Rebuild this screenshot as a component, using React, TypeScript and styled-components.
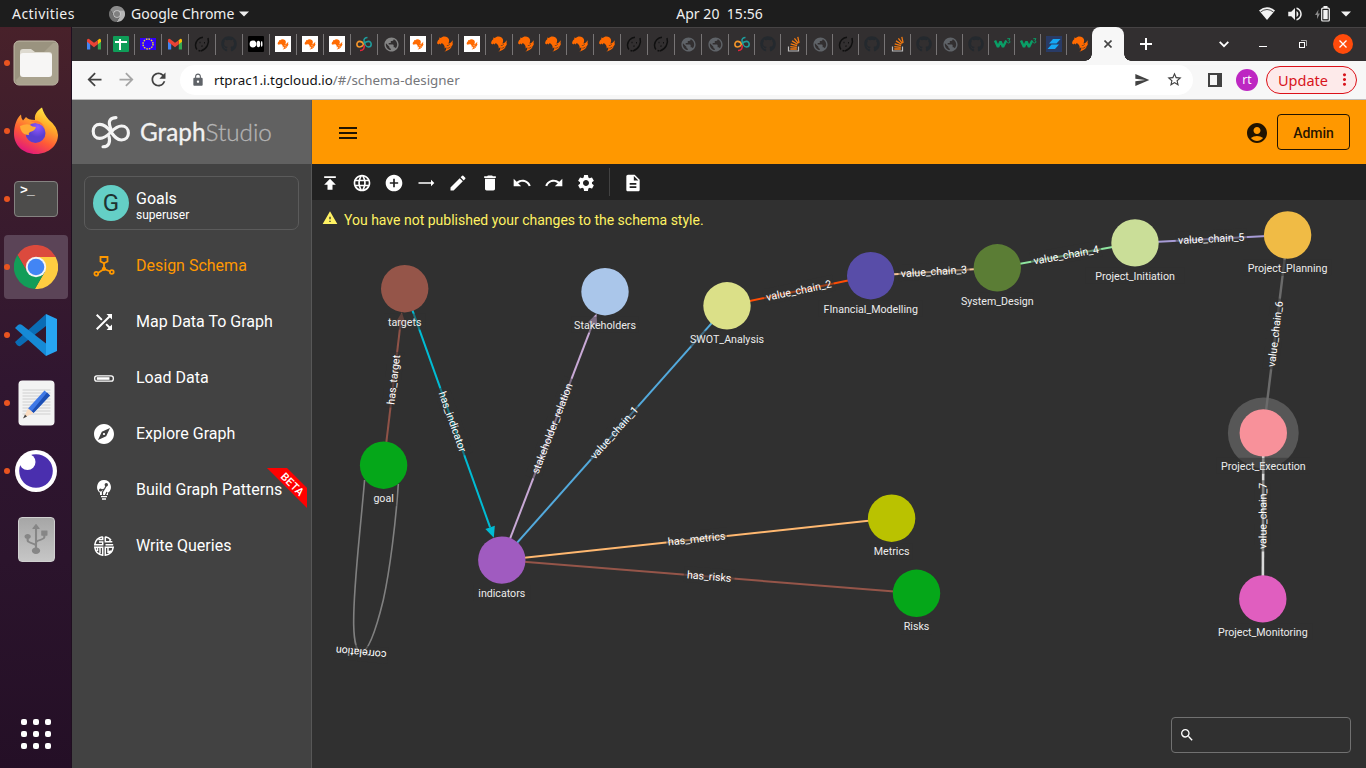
import React from "react";
import styled, { createGlobalStyle } from "styled-components";
import {
  MdPublish, MdLanguage, MdAddCircle, MdTrendingFlat, MdCreate, MdDelete, MdUndo, MdRedo,
  MdSettings, MdDescription, MdWarning, MdMenu, MdAccountCircle, MdSearch, MdShuffle, MdExplore,
  MdPublic, MdLock, MdArrowBack, MdArrowForward, MdRefresh, MdSend, MdStarBorder, MdMoreVert,
  MdVolumeUp,
} from "react-icons/md";
import { FaGithub, FaUsb } from "react-icons/fa";

const GlobalStyle = createGlobalStyle`
  * { box-sizing: border-box; }
  body { margin: 0; background: #303030; overflow: hidden; }
  svg { display: block; flex: none; }
`;

const ubuntu = `"Noto Sans", sans-serif`;
const roboto = `Roboto, sans-serif`;

const Desktop = styled.div`
  width: 1366px;
  height: 768px;
  display: flex;
  flex-direction: column;
  overflow: hidden;
  font-family: ${roboto};
`;

/* ---------- system bar ---------- */
const SystemBar = styled.header`
  height: 27px;
  display: grid;
  grid-template-columns: 1fr auto 1fr;
  align-items: center;
  background: #1d1d1d;
  color: #f0f0f0;
  font: 14px/27px ${ubuntu};
  white-space: pre;
`;
const SystemLeft = styled.div`
  display: flex;
  align-items: center;
  padding-left: 12px;
`;
const Activities = styled.span`
  width: 97px;
  letter-spacing: 0.45px;
`;
const AppName = styled.span`
  padding: 0 5px 0 6px;
`;
const Clock = styled.div`
  padding-left: 73px;
  letter-spacing: 0.05px;
`;
const SystemRight = styled.div`
  display: flex;
  align-items: center;
  justify-content: flex-end;
  padding-right: 15px;
`;
const TrayIcon = styled.span<{ $gap: number }>`
  margin-left: ${(p) => p.$gap}px;
`;

const Workspace = styled.div`
  flex: 1;
  display: flex;
  min-height: 0;
`;

/* ---------- dock ---------- */
const Dock = styled.nav`
  width: 72px;
  display: flex;
  flex-direction: column;
  gap: 4px;
  padding: 4px 4px 0;
  background: linear-gradient(#48212a, #3b1c2d 22%, #301630 48%, #2b142c 72%, #240f26);
  border-right: 1px solid #1f0f20;
`;
const DockItem = styled.div<{ $active?: boolean }>`
  width: 64px;
  height: 64px;
  flex: none;
  display: flex;
  align-items: center;
  justify-content: center;
  position: relative;
  border-radius: 4px;
  background: ${(p) => (p.$active ? "#5b4457" : "transparent")};
`;
const RunningDot = styled.i`
  position: absolute;
  left: 0;
  top: 29px;
  width: 6px;
  height: 6px;
  border-radius: 50%;
  background: #e95420;
`;
const AppsGrid = styled.div`
  margin: auto auto 19px;
  display: grid;
  grid-template-columns: repeat(3, 6px);
  gap: 6px;
  i {
    height: 6px;
    border-radius: 2px;
    background: #fff;
  }
`;

/* ---------- browser ---------- */
const Browser = styled.main`
  flex: 1;
  min-width: 0;
  display: flex;
  flex-direction: column;
`;
const TabStrip = styled.div`
  height: 34px;
  display: flex;
  align-items: flex-start;
  padding-left: 9px;
  background: #322f30;
  border-top: 1px solid #464344;
`;
const Tab = styled.div<{ $width: number; $last?: boolean }>`
  width: ${(p) => p.$width}px;
  height: 21px;
  margin-top: 6px;
  padding: 0 0 1px 5px;
  display: flex;
  align-items: center;
  flex: none;
  border-right: ${(p) => (p.$last ? "none" : "1px solid #777475")};
`;
const ActiveTab = styled.div`
  width: 32px;
  height: 34px;
  margin: -1px 0 0 -1px;
  display: flex;
  align-items: center;
  justify-content: center;
  background: #f7f7f7;
  border-radius: 8px 8px 0 0;
  position: relative;
  &::before, &::after {
    content: "";
    position: absolute;
    bottom: 0;
    width: 7px;
    height: 7px;
  }
  &::before { left: -7px; background: radial-gradient(circle at 0 0, transparent 6.5px, #f7f7f7 7px); }
  &::after { right: -7px; background: radial-gradient(circle at 100% 0, transparent 6.5px, #f7f7f7 7px); }
`;
const WindowTools = styled.div`
  flex: 1;
  height: 32px;
  display: flex;
  align-items: center;
  padding: 0 13px 0 15px;
`;
const ToolGap = styled.span<{ $w: number }>`
  width: ${(p) => p.$w}px;
`;
const CloseButton = styled.span`
  width: 20px;
  height: 20px;
  border-radius: 50%;
  background: #ff4b0b;
  display: grid;
  place-items: center;
`;
const AddressRow = styled.div`
  height: 39px;
  display: flex;
  align-items: center;
  padding: 0 9px 1px 11px;
  background: #f7f7f7;
  border-bottom: 1px solid #bdbdbd;
  color: #424242;
`;
const NavIcon = styled.span<{ $dim?: boolean }>`
  width: 32px;
  padding-left: 0.5px;
  display: flex;
  color: ${(p) => (p.$dim ? "#a5a5a5" : "#424242")};
`;
const AddressBar = styled.div`
  width: 1013px;
  height: 30px;
  margin-left: 1px;
  display: flex;
  align-items: center;
  padding: 0 10px 0 11px;
  border-radius: 15px;
  background: #fff;
  color: #5f6368;
  font: 13.4px/30px ${ubuntu};
`;
const Url = styled.span`
  flex: 1;
  margin-left: 9px;
  color: #75767a;
  b { font-weight: 400; color: #111; }
`;
const Profile = styled.span`
  width: 22px;
  height: 22px;
  margin: 0 8px 0 14px;
  border-radius: 50%;
  background: #bd27c2;
  color: #fff;
  font: 12px/21px ${ubuntu};
  text-align: center;
`;
const UpdateButton = styled.button`
  width: 91px;
  height: 28px;
  display: flex;
  align-items: center;
  justify-content: space-between;
  padding: 0 2px 0 11px;
  border: 1px solid #dc1018;
  border-radius: 14px;
  background: #fdeaea;
  color: #d8141c;
  font: 14.5px/26px ${ubuntu};
`;

/* ---------- web app ---------- */
const Studio = styled.div`
  flex: 1;
  display: flex;
  min-height: 0;
  color: #fff;
`;
const SideBar = styled.aside`
  width: 240px;
  background: #424242;
  border-right: 1px solid #575757;
`;
const Brand = styled.div`
  height: 64px;
  display: flex;
  align-items: center;
  padding-left: 19px;
  background: #616161;
`;
const BrandName = styled.div`
  margin-left: 9px;
  font: 400 24.3px/64px Lato, sans-serif;
  color: #f2f2f2;
  -webkit-text-stroke: 0.3px #f2f2f2;
  span { color: #b4b4b4; font-weight: 300; -webkit-text-stroke: 0.3px #b4b4b4; }
`;
const GraphCard = styled.div`
  height: 54px;
  margin: 12px 12px 0;
  display: flex;
  align-items: center;
  padding-left: 8px;
  border: 1px solid #5b5b5b;
  border-radius: 7px;
`;
const Avatar = styled.div`
  width: 36px;
  height: 36px;
  border-radius: 50%;
  background: #64cfc6;
  color: #1e3331;
  font: 24px/36px ${roboto};
  text-align: center;
`;
const GraphInfo = styled.div`
  margin-left: 7px;
  padding-top: 4px;
  font: 16px/19px ${roboto};
  small { display: block; font-size: 12px; line-height: 14px; }
`;
const NavList = styled.div`
  padding-top: 8px;
`;
const NavItem = styled.div<{ $active?: boolean }>`
  height: 56px;
  display: flex;
  align-items: center;
  position: relative;
  padding-left: 20px;
  font: 16px/24px ${roboto};
  color: ${(p) => (p.$active ? "#ff9800" : "#fff")};
`;
const NavGlyph = styled.span`
  width: 44px;
  display: flex;
`;
const BetaRibbon = styled.div`
  position: absolute;
  left: 195px;
  top: 6px;
  width: 40px;
  height: 40px;
  background: #f00;
  clip-path: polygon(0 0, 50% 0, 100% 50%, 100% 100%);
  display: grid;
  place-items: center;
  span {
    font: 500 11px/11px ${roboto};
    letter-spacing: 0.2px;
    transform: translate(5.5px, -4px) rotate(45deg);
  }
`;

const Content = styled.section`
  flex: 1;
  display: flex;
  flex-direction: column;
  min-width: 0;
  background: #303030;
`;
const AppBar = styled.div`
  height: 64px;
  display: flex;
  align-items: center;
  padding: 1px 16px 0 24px;
  background: #ff9800;
  color: rgba(0, 0, 0, 0.87);
`;
const AdminButton = styled.button`
  width: 73px;
  height: 36px;
  margin: -1px 0 0 8px;
  border: 1px solid rgba(0, 0, 0, 0.87);
  border-radius: 4px;
  background: none;
  color: inherit;
  font: 500 14px/34px ${roboto};
`;
const Spacer = styled.span`
  flex: 1;
`;
const ToolBar = styled.div`
  height: 36px;
  display: flex;
  align-items: center;
  padding: 2px 0 0 2px;
  background: #212121;
`;
const Tool = styled.span`
  width: 32px;
  padding-left: 6px;
  display: flex;
`;
const ToolDivider = styled.span`
  width: 1px;
  height: 28px;
  margin: -2px 7px 0;
  background: #424242;
`;
const Canvas = styled.div`
  flex: 1;
  position: relative;
`;
const Notice = styled.div`
  display: flex;
  align-items: center;
  gap: 6px;
  padding: 10px 0 0 10px;
  color: #fff263;
  font: 14px/20px ${roboto};
  position: relative;
  svg { margin-top: -4px; }
`;
const Graph = styled.svg`
  position: absolute;
  inset: 0;
  font-family: ${roboto};
  font-size: 10.67px;
`;
const SearchBox = styled.label`
  position: absolute;
  right: 15px;
  bottom: 15px;
  width: 180px;
  height: 36px;
  display: flex;
  align-items: center;
  padding-left: 7px;
  border: 1px solid #717171;
  border-radius: 4px;
`;

/* ---------- favicons ---------- */
const Gmail = () => (
  <svg width="16" height="16" viewBox="0 0 16 16">
    <path d="M1 4v9.500h3.200V6.500z" fill="#4285f4" />
    <path d="M15 4v9.500h-3.200V6.500z" fill="#34a853" />
    <path d="M11.800 4.200L13 3q2-.8 2 1.500v1.300l-3.200 2.500z" fill="#fbbc04" />
    <path d="M1 4.500Q1 2.200 3 3L8 6.800 11.800 4.200V8.300L8 11.200 4.200 8.300 1 5.800z" fill="#ea4335" />
  </svg>
);
const Sheets = () => (
  <svg width="16" height="16" viewBox="0 0 16 16">
    <rect width="16" height="16" rx="1" fill="#0f9d58" />
    <path d="M2 6h12M7 3v11" stroke="#fff" strokeWidth="2" />
  </svg>
);
const Stars = () => (
  <svg width="16" height="16" viewBox="0 0 16 16">
    <rect y="2" width="16" height="12" fill="#3200ff" />
    <circle cx="8" cy="8" r="5" fill="none" stroke="#e8dc20" strokeWidth="1.4" strokeDasharray="1.6 1" />
  </svg>
);
const DarkFace = () => (
  <svg width="16" height="16" viewBox="0 0 16 16" fill="none" stroke="#101010" strokeWidth="1.5">
    <path d="M9 1.200C5 1.500 1.500 5 1.500 9c0 2 .8 4 1.500 4.500M14 2c1.500 5-1 11-7 13M4.500 14.500l2 .5" />
    <path d="M5.500 6.500h1M10 6.800h1M7.500 10l1 .3" />
  </svg>
);
const Medium = () => (
  <svg width="16" height="16" viewBox="0 0 16 16">
    <rect width="16" height="16" rx="1" fill="#000" />
    <circle cx="5" cy="8" r="3.400" fill="#fff" />
    <ellipse cx="10.400" cy="8" rx="1.800" ry="3.200" fill="#fff" />
    <ellipse cx="13.700" cy="8" rx=".8" ry="3" fill="#fff" />
  </svg>
);
const tigerPath =
  "M0 7.300C.4 4.800 1.400 3.800 2.300 3.300L2.300 1.600L3.800 2C5.200.3 8.500-.2 10.600 1.600C12.400 3 12.600 5.200 11.300 7.600C13.300 7.200 14.700 6 15.400 4.200C15.900 5.600 15.700 6.600 15.200 7.500L16 7.200C15.700 9.300 14.600 10.500 13.600 11.200L14.600 11.100C13.300 13.200 10.900 14.800 7.300 15.800C9 14.400 9.600 12.900 9.200 11.200L7.600 12.400C7.900 10.700 7.400 9.400 6.300 8.300L4.800 7L3.600 8.400L2.400 7.600L1.400 8.600Z";
const Tiger = ({ boxed }: { boxed?: boolean }) => (
  <svg width="16" height="16" viewBox="0 0 16 16">
    {boxed && <rect width="16" height="16" fill="#fff" />}
    <g transform={boxed ? "translate(2.600 3) scale(.68)" : undefined}>
      <path d={tigerPath} fill="#ff6a00" />
      <path d="M12.800 8.200Q11.500 9.800 9.800 9.600M13.300 11Q12 12.300 10.300 12.200" stroke={boxed ? "#fff" : "#322f30"} strokeWidth=".6" fill="none" />
    </g>
  </svg>
);
const InfinityMark = () => (
  <svg width="16" height="16" viewBox="0 0 16 16" fill="none" strokeWidth="1.600">
    <path d="M8 8C6.300 10.500 5 11 3.700 11C2 11 .9 9.800.9 8.200C.9 6.600 2 5.400 3.700 5.400C5.500 5.400 7 6.800 8 8.500" stroke="#f5962a" />
    <path d="M11.500 1.500C9 1.500 7.700 3 8 5C8.400 7.500 10 11 12.400 11C14.200 11 15.200 9.800 15.200 8.200C15.200 6.600 14.200 5.400 12.400 5.400C10.800 5.400 9 6.500 8 8" stroke="#1f9c9c" />
    <path d="M8 9C8.800 12 7.500 14.600 4 14.500" stroke="#e0263c" />
  </svg>
);
const Globe = ({ dim }: { dim?: boolean }) => <MdPublic size={17} color={dim ? "#5f6368" : "#858585"} />;
const SchoolMark = () => (
  <svg width="17" height="16" viewBox="0 0 17 16" fill="none" stroke="#0a9e66">
    <path d="M1 4.500L4 11 6.500 5.500 9 11 12.300 4.500" strokeWidth="2.500" strokeLinejoin="bevel" />
    <path d="M13.300 2.700H16L14.800 4.500Q16.500 5 15.800 6.500Q14.500 7.500 13.300 6.500" strokeWidth="1" />
  </svg>
);
const BlueMark = () => (
  <svg width="16" height="16" viewBox="0 0 16 16">
    <rect width="16" height="16" fill="#293b66" />
    <path d="M7 3h7.500L10.500 7.400H3zM5.500 8.600H13L9 13H1.500z" fill="#15a7f5" />
  </svg>
);
const favicons: Record<string, React.ReactNode> = {
  m: <Gmail />, s: <Sheets />, e: <Stars />, d: <DarkFace />, M: <Medium />,
  g: <FaGithub size={16} color="#24292e" />, b: <Tiger boxed />, t: <Tiger />, i: <InfinityMark />,
  p: <Globe />, q: <Globe dim />, w: <SchoolMark />, z: <BlueMark />,
  o: (
    <svg width="16" height="16" viewBox="0 0 16 16" fill="none">
      <path d="M2.500 10.500V15h10v-4.500" stroke="#bcbbbb" strokeWidth="1.200" />
      <path d="M4.300 13h6.500M4.300 10.600l6.500.7M4.700 7.800l6.300 1.900M6 4.900l5.500 3.300M8.400 2.400l4 5M11.800.8l1.300 6" stroke="#f47a10" strokeWidth="1.300" />
    </svg>
  ),
};
const tabs = "msemdgMbbbipbtbtttttddq" + "qigoqdgogqgwwzt";

/* ---------- dock artwork ---------- */
const FilesIcon = () => (
  <svg width="46" height="46" viewBox="0 0 46 46">
    <rect x="1" y="1" width="44" height="44" rx="5" fill="#9a937f" stroke="#c1bba9" />
    <path d="M3 40L40 3H44V44H4z" fill="#a9a28e" />
    <path d="M7 12q0-3 3-3h8l4 3h14q3 0 3 3v8H7z" fill="#dedad0" />
    <rect x="7" y="13" width="32" height="24" rx="3" fill="#f7f6f5" />
  </svg>
);
const FirefoxIcon = () => (
  <svg width="46" height="48" viewBox="0 0 46 48">
    <defs>
      <linearGradient id="flame" x1=".8" y1="0" x2=".3" y2="1">
        <stop offset="0" stopColor="#fff44f" /><stop offset=".3" stopColor="#ffb52a" />
        <stop offset=".65" stopColor="#ff5a36" /><stop offset="1" stopColor="#e0157f" />
      </linearGradient>
      <radialGradient id="orb" cx=".6" cy=".2"><stop offset="0" stopColor="#9059ff" /><stop offset="1" stopColor="#5a3fd0" /></radialGradient>
    </defs>
    <path d="M1 27C1 18 4 11 8 7.500q0 4 2 6l3-3.500q2 3 9 3C21 7 25 3 29 .5q2 7 7 12.500 8 6 9 15C45 38 36 47 23 47S1 38 1 27z" fill="url(#flame)" />
    <circle cx="22.500" cy="26" r="10" fill="url(#orb)" />
    <path d="M7 19q7-3 10-1 2 2 6 2-1 4-6 5-2 1-1 3-5 0-7-3-2-3-2-6z" fill="#ffab35" />
    <path d="M17 14q9-2 14 5 2 4 1 9 2-11-10-12z" fill="#ff7a33" />
  </svg>
);
const TerminalFace = styled.div`
  width: 44px;
  height: 36px;
  border: 1px solid #858381;
  border-radius: 4px;
  background: #4d4c4b;
  color: #fff;
  font: 700 13px/15px "Liberation Mono", monospace;
  letter-spacing: -0.7px;
  padding: 1px 0 0 5px;
`;
const ChromeIcon = ({ size, mono }: { size: number; mono?: boolean }) => {
  const c = mono ? ["#8c8c8c", "#b5b5b5", "#6f6f6f", "#808080", "#d0d0d0"] : ["#dc4a3d", "#fecd41", "#129d58", "#4285f4", "#f4f4f4"];
  return (
    <svg width={size} height={size} viewBox="0 0 44 44">
      <path d="M22 12H41.600A22 22 0 0 0 3.500 10L13.340 27z" fill={c[0]} />
      <path d="M30.660 27L20.900 44A22 22 0 0 0 41.600 12H22z" fill={c[1]} />
      <path d="M13.340 27L3.500 10A22 22 0 0 0 20.900 44L30.660 27z" fill={c[2]} />
      <circle cx="22" cy="22" r="10.200" fill={c[4]} />
      <circle cx="22" cy="22" r="8.300" fill={c[3]} />
    </svg>
  );
};
const CodeIcon = () => (
  <svg width="42" height="42" viewBox="0 0 42 42">
    <path d="M0 28L31 0V12L6 31.500Q4 33 2 31z" fill="#0a6cb5" />
    <path d="M0 14L3 11Q5 9.500 7 11L31 29.500V42z" fill="#168ad6" />
    <path d="M31 0L42 5V37L31 42z" fill="#27a5f2" />
  </svg>
);
const EditorIcon = () => (
  <svg width="37" height="46" viewBox="0 0 36 46">
    <rect width="36" height="45" rx="4" y=".5" fill="#f3f3f3" />
    {[10, 13, 16, 19, 22, 25, 28, 31, 34].map((y) => <path key={y} d={`M4 ${y}H32`} stroke="#cfcfcf" />)}
    <path d="M26 10.500l5.500 5L15 33l-5.500-4.500z" fill="#3f78e6" />
    <path d="M28.500 12.500l3 3L15 33l-2-1.500z" fill="#1d4fb4" />
    <path d="M9.500 28.500L15 33 5 38z" fill="#fbdcc0" />
    <path d="M6.500 34.500l2 2L4.500 38.500z" fill="#444" />
  </svg>
);
const MoonIcon = () => (
  <svg width="42" height="42" viewBox="0 0 42 42">
    <circle cx="21" cy="21" r="21" fill="#fff" />
    <circle cx="21" cy="21" r="16.800" fill="#4a2fae" />
    <circle cx="12.500" cy="12" r="8" fill="#fff" />
  </svg>
);
const DriveFace = styled.div`
  width: 37px;
  height: 45px;
  border-radius: 4px;
  border: 1px solid #d0d0d0;
  background: linear-gradient(#a6a6a6, #c6c6c6);
  color: #868686;
  display: grid;
  place-items: center;
  svg { transform: rotate(-90deg) scaleY(1.25); }
`;

const dockItems: { icon: React.ReactNode; running?: boolean; active?: boolean }[] = [
  { icon: <FilesIcon />, running: true },
  { icon: <FirefoxIcon />, running: true },
  { icon: <TerminalFace>&gt;_</TerminalFace>, running: true },
  { icon: <ChromeIcon size={44} />, running: true, active: true },
  { icon: <CodeIcon />, running: true },
  { icon: <EditorIcon />, running: true },
  { icon: <MoonIcon />, running: true },
  { icon: <DriveFace><FaUsb size={30} /></DriveFace> },
];

/* ---------- sidebar glyphs ---------- */
const SchemaGlyph = () => (
  <svg width="24" height="24" viewBox="0 0 24 24" fill="none" stroke="currentColor" strokeWidth="1.800">
    <path d="M8.500 3h7v4.500L12 9.300 8.500 7.500z" />
    <path d="M12 9v6M12 15l-6 4M12 15l6.500 2.500" />
    <circle cx="4.300" cy="19.800" r="1.900" /><circle cx="19.800" cy="18" r="1.900" />
    <circle cx="12" cy="14.800" r="1.200" fill="currentColor" />
  </svg>
);
const LoadGlyph = () => (
  <svg width="24" height="24" viewBox="0 0 24 24" fill="none" stroke="#fff">
    <rect x="2.700" y="9.900" width="18.600" height="5.200" rx="2.200" strokeWidth="1.300" />
    <path d="M4.800 12.500h12.700" strokeWidth="2.600" />
  </svg>
);
const PatternGlyph = () => (
  <svg width="24" height="24" viewBox="0 0 24 24">
    <path d="M12 2a7 7 0 0 0-4 12.700V17h8v-2.300A7 7 0 0 0 12 2z" fill="#fff" />
    <path d="M8 12.500l4.500-1.500 2-4M10.500 17v-3l2-3M13.500 17l1.500-3" fill="none" stroke="#424242" strokeWidth="1.200" />
    <circle cx="14.300" cy="6.700" r="1.700" fill="#424242" /><circle cx="8.500" cy="12" r="1.500" fill="#424242" />
    <path d="M9 18.700h6M10 21h4" stroke="#fff" strokeWidth="1.300" />
  </svg>
);
const QueryGlyph = () => (
  <svg width="24" height="24" viewBox="0 0 24 24" fill="none" stroke="#fff" strokeWidth="1.500">
    <path d="M10.700 2.800A9.400 9.400 0 0 0 2.800 10.700H10.700V8H7M10.700 2.800V5.500H6.500M13.300 2.800V7.800H20.300M13.300 2.800A9.400 9.400 0 0 1 19 6M13.500 10.700H21.200M18 5v3M2.800 13.300A9.400 9.400 0 0 0 10.700 21.200V13.300zM5.500 13.500v3.500M8 13.500v6M13.300 21.200V13.300H21.200A9.400 9.400 0 0 1 13.300 21.200zM16 13.500v4.500l3-1" />
  </svg>
);
const navItems: { label: string; icon: React.ReactNode; active?: boolean; beta?: boolean }[] = [
  { label: "Design Schema", icon: <SchemaGlyph />, active: true },
  { label: "Map Data To Graph", icon: <MdShuffle size={24} /> },
  { label: "Load Data", icon: <LoadGlyph /> },
  { label: "Explore Graph", icon: <MdExplore size={24} /> },
  { label: "Build Graph Patterns", icon: <PatternGlyph />, beta: true },
  { label: "Write Queries", icon: <QueryGlyph /> },
];
const BrandMark = () => (
  <svg width="40" height="36" viewBox="0 0 40 36" fill="none" stroke="#f4f4f4" strokeWidth="3.100" strokeLinecap="round">
    <path d="M20 18C23 22 25.500 26 30.500 26C35 26 37.400 23 37.400 19C37.400 14.900 34.600 12 30.500 12C26 12 23 15 20 18C16.500 21.500 13.500 24.400 8.900 24.400C4.800 24.400 2.200 21.400 2.200 17.300C2.200 13.200 4.600 10.400 8.900 10.400C14 10.400 17 14 20 18Z" />
    <path d="M25 3.600C19.500 3.600 17.500 7 18.600 11C19 13 19.800 15 21 17M18 22.500C19.500 28 18 32.800 12 32.800" />
  </svg>
);

/* ---------- schema graph ---------- */
const R = 23.7;
type Pt = [number, number];
const nodes: Record<string, { at: Pt; fill: string; halo?: boolean }> = {
  targets: { at: [404.7, 288.7], fill: "#955549" },
  Stakeholders: { at: [605, 291.7], fill: "#aac6ea" },
  SWOT_Analysis: { at: [727, 305.8], fill: "#dbe088" },
  FInancial_Modelling: { at: [870.7, 275.7], fill: "#584da8" },
  System_Design: { at: [997.3, 267.8], fill: "#5b7d35" },
  Project_Initiation: { at: [1135, 242.9], fill: "#cade98" },
  Project_Planning: { at: [1287.6, 235], fill: "#f0bb45" },
  Project_Execution: { at: [1263.3, 432.9], fill: "#f8919a", halo: true },
  Project_Monitoring: { at: [1262.8, 598.9], fill: "#e05ebf" },
  goal: { at: [383.6, 465.2], fill: "#05a719" },
  indicators: { at: [501.8, 560.1], fill: "#a05bc0" },
  Metrics: { at: [891.6, 518.2], fill: "#bac200" },
  Risks: { at: [916.5, 593.3], fill: "#05a719" },
};
const edges: { from: string; to: string; label: string; color: string; arrow?: boolean; w?: number }[] = [
  { from: "goal", to: "targets", label: "has_target", color: "#8f5247", arrow: true },
  { from: "targets", to: "indicators", label: "has_indicator", color: "#00bcd4", arrow: true },
  { from: "indicators", to: "Stakeholders", label: "stakeholder_relation", color: "#c8a9d6", arrow: true },
  { from: "indicators", to: "SWOT_Analysis", label: "value_chain_1", color: "#53aadd" },
  { from: "SWOT_Analysis", to: "FInancial_Modelling", label: "value_chain_2", color: "#ff4d05" },
  { from: "FInancial_Modelling", to: "System_Design", label: "value_chain_3", color: "#f5c396" },
  { from: "System_Design", to: "Project_Initiation", label: "value_chain_4", color: "#8fe6a0" },
  { from: "Project_Initiation", to: "Project_Planning", label: "value_chain_5", color: "#a79bd6" },
  { from: "Project_Execution", to: "Project_Planning", label: "value_chain_6", color: "#6b6b6b", w: 2.4 },
  { from: "Project_Monitoring", to: "Project_Execution", label: "value_chain_7", color: "#d9d9d9", w: 2.6 },
  { from: "indicators", to: "Metrics", label: "has_metrics", color: "#ffb870" },
  { from: "indicators", to: "Risks", label: "has_risks", color: "#955549" },
];

const GraphLabel = ({ x, y, rot = 0, text, color, length }: { x: number; y: number; rot?: number; text: string; color: string; length: number }) => (
  <g transform={`translate(${x} ${y}) rotate(${rot})`}>
    <rect x={-length / 2} y={-8.8} width={length} height={16} fill="#303030" opacity={0.5} />
    <text textAnchor="middle" y={3.4} fill={color}>{text}</text>
  </g>
);

const SchemaGraph = () => (
  <Graph width="1054" height="568" viewBox="312 200 1054 568">
    {Object.values(nodes).filter((n) => n.halo).map((n) => (
      <circle key={n.fill} cx={n.at[0]} cy={n.at[1]} r={35.4} fill="#575757" />
    ))}
    <path d="M364.600 480C359 545 353 590 353.700 625C354 640 356.500 652 361 652.500C368 652 376 630 383.300 600C390 570 396 520 398.300 484" fill="none" stroke="#808080" strokeWidth="1.600" />
    {edges.map((e) => {
      const [x1, y1] = nodes[e.from].at;
      const [x2, y2] = nodes[e.to].at;
      const len = Math.hypot(x2 - x1, y2 - y1);
      const ux = (x2 - x1) / len;
      const uy = (y2 - y1) / len;
      const tx = x2 - ux * R;
      const ty = y2 - uy * R;
      const bx = tx - ux * 11;
      const by = ty - uy * 11;
      return (
        <g key={e.label}>
          <line x1={x1} y1={y1} x2={e.arrow ? bx : x2} y2={e.arrow ? by : y2} stroke={e.color} strokeWidth={e.w ?? 2} />
          {e.arrow && (
            <polygon fill={e.color} points={`${tx},${ty} ${bx - uy * 5},${by + ux * 5} ${bx + uy * 5},${by - ux * 5}`} />
          )}
        </g>
      );
    })}
    {Object.entries(nodes).map(([name, n]) => (
      <circle key={name} cx={n.at[0]} cy={n.at[1]} r={R} fill={n.fill} />
    ))}
    {edges.map((e) => {
      const [x1, y1] = nodes[e.from].at;
      const [x2, y2] = nodes[e.to].at;
      const len = Math.hypot(x2 - x1, y2 - y1);
      const shift = e.arrow ? 2.8 : 0;
      const x = (x1 + x2) / 2 - ((x2 - x1) / len) * shift;
      const y = (y1 + y2) / 2 - ((y2 - y1) / len) * shift;
      const rot = (Math.atan2(y2 - y1, x2 - x1) * 180) / Math.PI;
      return <GraphLabel key={e.label} x={x} y={y} rot={rot} text={e.label} color="#fff" length={e.label.length * 5.1 + 5} />;
    })}
    <GraphLabel x={361} y={652.5} rot={185.6} text="correlation" color="#fff" length={54} />
    {Object.entries(nodes).map(([name, n]) => (
      <GraphLabel key={name} x={n.at[0]} y={n.at[1] + 33.7} text={name} color="#ececec" length={name.length * 5.2 + 5} />
    ))}
  </Graph>
);

const tools = [MdPublish, MdLanguage, MdAddCircle, MdTrendingFlat, MdCreate, MdDelete, MdUndo, MdRedo, MdSettings];

export default function App() {
  return (
    <>
      <GlobalStyle />
      <Desktop>
        <SystemBar>
          <SystemLeft>
            <Activities>Activities</Activities>
            <ChromeIcon size={16} mono />
            <AppName>Google Chrome</AppName>
            <svg width="10" height="6" viewBox="0 0 10 6"><path d="M0 .5h10L5 5.500z" fill="#eee" /></svg>
          </SystemLeft>
          <Clock>{"Apr 20  15:56"}</Clock>
          <SystemRight>
            <svg width="16" height="13" viewBox="0 0 16 13"><path d="M0 3.500Q8-3 16 3.500L8 13z" fill="#f2f2f2" /><path d="M1.500 5Q8 0 14.500 5" fill="none" stroke="#1d1d1d" strokeWidth=".8" /></svg>
            <TrayIcon $gap={11}><MdVolumeUp size={18} /></TrayIcon>
            <TrayIcon $gap={10}>
              <svg width="17" height="16" viewBox="0 0 17 16">
                <path d="M4.500 3.500L1 9h2v4l3-5.500H4z" fill="#888" />
                <rect x="7.700" y="2.200" width="7.600" height="12.800" rx="1" fill="none" stroke="#f2f2f2" strokeWidth="1.200" />
                <rect x="9.300" y="4" width="4.400" height="9.200" fill="#f2f2f2" /><rect x="9.500" y="0" width="4" height="2" fill="#f2f2f2" />
              </svg>
            </TrayIcon>
            <TrayIcon $gap={10}><svg width="10" height="6" viewBox="0 0 10 6"><path d="M0 .5h10L5 5.500z" fill="#f2f2f2" /></svg></TrayIcon>
          </SystemRight>
        </SystemBar>
        <Workspace>
          <Dock>
            {dockItems.map((d, i) => (
              <DockItem key={i} $active={d.active}>
                {d.running && <RunningDot />}
                {d.icon}
              </DockItem>
            ))}
            <AppsGrid>{Array.from({ length: 9 }, (_, i) => <i key={i} />)}</AppsGrid>
          </Dock>
          <Browser>
            <TabStrip>
              {tabs.split("").map((t, i) => (
                <Tab key={i} $width={i < 24 ? 27 : 26} $last={i === tabs.length - 1}>{favicons[t]}</Tab>
              ))}
              <ActiveTab>
                <svg width="8" height="8" viewBox="0 0 8 8"><path d="M.5.5l7 7M7.500.5l-7 7" stroke="#444" strokeWidth="1.600" /></svg>
              </ActiveTab>
              <WindowTools>
                <svg width="14" height="14" viewBox="0 0 14 14"><path d="M7 1v12M1 7h12" stroke="#fff" strokeWidth="2" /></svg>
                <ToolGap $w={66} />
                <svg width="10" height="7" viewBox="0 0 10 7"><path d="M.7.8L5 5.200 9.300.8" fill="none" stroke="#fff" strokeWidth="1.800" /></svg>
                <ToolGap $w={30} />
                <svg width="8" height="8" viewBox="0 0 8 8"><path d="M0 6.500h8" stroke="#fff" /></svg>
                <ToolGap $w={32} />
                <svg width="8" height="8" viewBox="0 0 8 8" fill="none"><rect x=".5" y="2.500" width="5" height="5" stroke="#fff" /><path d="M2 .5h5.500V6" stroke="#aaa" /></svg>
                <Spacer />
                <CloseButton><svg width="8" height="8" viewBox="0 0 8 8"><path d="M.5.5l7 7M7.500.5l-7 7" stroke="#fff" strokeWidth="1.300" /></svg></CloseButton>
              </WindowTools>
            </TabStrip>
            <AddressRow>
              <NavIcon><MdArrowBack size={21} /></NavIcon>
              <NavIcon $dim><MdArrowForward size={21} /></NavIcon>
              <NavIcon><MdRefresh size={21} /></NavIcon>
              <AddressBar>
                <MdLock size={14} />
                <Url><b>rtprac1.i.tgcloud.io</b>/#/schema-designer</Url>
                <MdSend size={16} color="#424242" />
                <ToolGap $w={16} />
                <MdStarBorder size={17} color="#424242" />
              </AddressBar>
              <ToolGap $w={15} />
              <svg width="14" height="14" viewBox="0 0 14 14"><path d="M0 0h14v14H0zM2 2v10h7V2z" fill="#424242" fillRule="evenodd" /></svg>
              <Profile>rt</Profile>
              <UpdateButton>Update<MdMoreVert size={19} /></UpdateButton>
            </AddressRow>
            <Studio>
              <SideBar>
                <Brand>
                  <BrandMark />
                  <BrandName>Graph<span>Studio</span></BrandName>
                </Brand>
                <GraphCard>
                  <Avatar>G</Avatar>
                  <GraphInfo>Goals<small>superuser</small></GraphInfo>
                </GraphCard>
                <NavList>
                  {navItems.map((n) => (
                    <NavItem key={n.label} $active={n.active}>
                      <NavGlyph>{n.icon}</NavGlyph>
                      {n.label}
                      {n.beta && <BetaRibbon><span>BETA</span></BetaRibbon>}
                    </NavItem>
                  ))}
                </NavList>
              </SideBar>
              <Content>
                <AppBar>
                  <MdMenu size={24} />
                  <Spacer />
                  <MdAccountCircle size={24} />
                  <AdminButton>Admin</AdminButton>
                </AppBar>
                <ToolBar>
                  {tools.map((Icon, i) => <Tool key={i}><Icon size={20} /></Tool>)}
                  <ToolDivider />
                  <Tool><MdDescription size={20} /></Tool>
                </ToolBar>
                <Canvas>
                  <SchemaGraph />
                  <Notice><MdWarning size={16} />You have not published your changes to the schema style.</Notice>
                  <SearchBox><MdSearch size={16} /></SearchBox>
                </Canvas>
              </Content>
            </Studio>
          </Browser>
        </Workspace>
      </Desktop>
    </>
  );
}
